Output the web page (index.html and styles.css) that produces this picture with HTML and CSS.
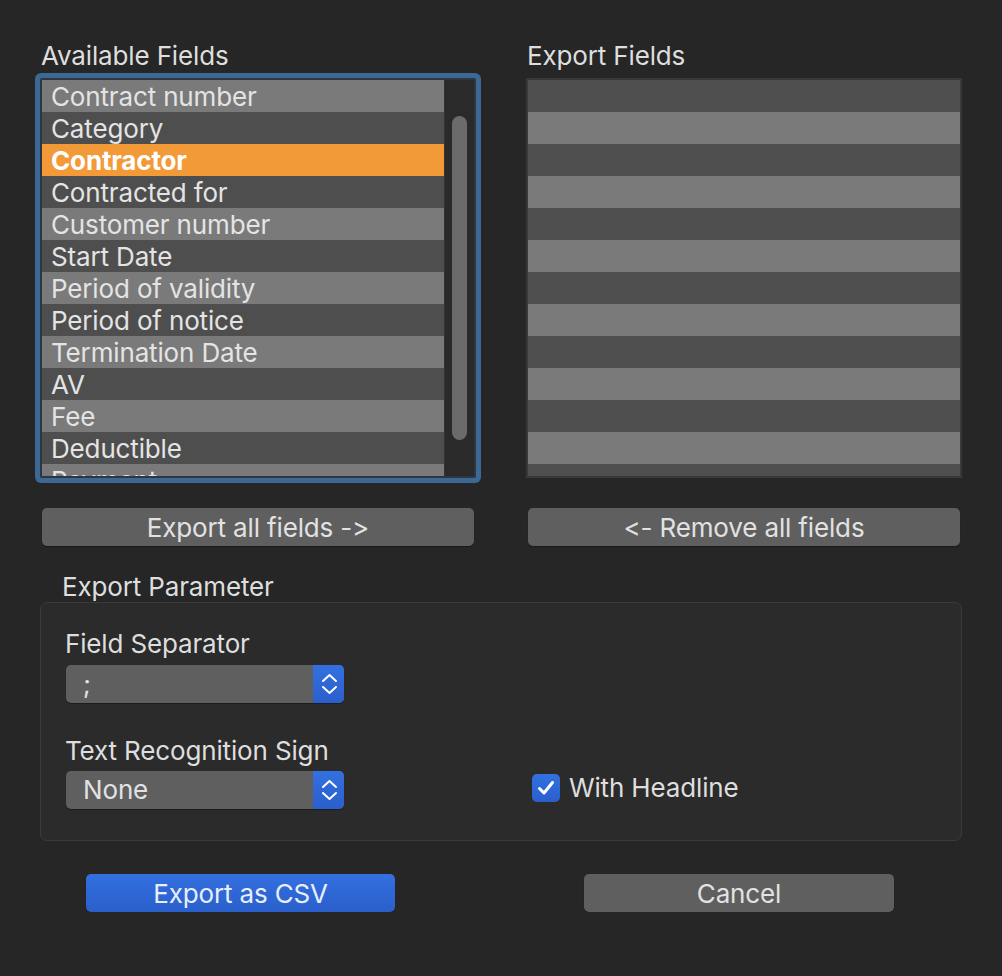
FILE: index.html
```html
<!DOCTYPE html>
<html lang="en">
<head>
    <meta charset="UTF-8">
    <meta name="viewport" content="width=device-width, initial-scale=1.0">
    <title>Export</title>
    <link rel="stylesheet" href="styles.css">
</head>
<body>
    <div class="dialog">
        <div class="columns">
            <div class="column">
                <div class="caption">Available Fields</div>
                <div class="list focused">
                    <ul class="rows odd-first">
                        <li>Contract number</li>
                        <li>Category</li>
                        <li class="selected">Contractor</li>
                        <li>Contracted for</li>
                        <li>Customer number</li>
                        <li>Start Date</li>
                        <li>Period of validity</li>
                        <li>Period of notice</li>
                        <li>Termination Date</li>
                        <li>AV</li>
                        <li>Fee</li>
                        <li>Deductible</li>
                        <li>Payment</li>
                    </ul>
                    <div class="scroller"><div class="thumb"></div></div>
                </div>
                <button class="push">Export all fields -&gt;</button>
            </div>
            <div class="column">
                <div class="caption">Export Fields</div>
                <div class="list">
                    <ul class="rows">
                        <li></li><li></li><li></li><li></li><li></li><li></li><li></li>
                        <li></li><li></li><li></li><li></li><li></li><li></li>
                    </ul>
                </div>
                <button class="push">&lt;- Remove all fields</button>
            </div>
        </div>

        <div class="caption group-caption">Export Parameter</div>
        <div class="group">
            <div class="params">
                <div class="label">Field Separator</div>
                <div class="popup">
                    <span class="popup-value">;</span>
                    <span class="popup-arrows">
                        <svg width="31" height="38" viewBox="0 0 31 38"><path d="M10 16 L16.5 10 L23 16 M10 22 L16.5 28 L23 22" fill="none" stroke="#fff" stroke-width="2" stroke-linecap="round" stroke-linejoin="round"/></svg>
                    </span>
                </div>
                <div class="label second">Text Recognition Sign</div>
                <div class="popup">
                    <span class="popup-value">None</span>
                    <span class="popup-arrows">
                        <svg width="31" height="38" viewBox="0 0 31 38"><path d="M10 16 L16.5 10 L23 16 M10 22 L16.5 28 L23 22" fill="none" stroke="#fff" stroke-width="2" stroke-linecap="round" stroke-linejoin="round"/></svg>
                    </span>
                </div>
            </div>
            <label class="check">
                <span class="box">
                    <svg width="28" height="28" viewBox="0 0 28 28"><path d="M7.5 14.5 L12 19 L20.5 8.5" fill="none" stroke="#fff" stroke-width="3" stroke-linecap="round" stroke-linejoin="round"/></svg>
                </span>
                With Headline
            </label>
        </div>

        <div class="actions">
            <button class="push default">Export as CSV</button>
            <button class="push cancel">Cancel</button>
        </div>
    </div>
</body>
</html>
```

FILE: styles.css
```css
body {
    margin: 0;
    background-color: #262626;
    color: #dedede;
    font-family: Inter, "Noto Sans", sans-serif;
    font-size: 26px;
    letter-spacing: -0.15px;
    font-feature-settings: "calt" 0, "liga" 0;
}
.dialog {
    padding: 41px 40px 0 40px;
    width: 922px;
}
.columns {
    display: flex;
    gap: 50px;
}
.column {
    width: 436px;
    display: flex;
    flex-direction: column;
}
.caption {
    line-height: 30px;
    height: 30px;
    padding-left: 1px;
    margin-bottom: 7px;
}
.list {
    height: 396px;
    border: 2px solid #383838;
    background-color: #2b2b2b;
    display: flex;
    overflow: hidden;
}
.focused {
    border-color: #2e3640;
    border-radius: 2px;
    box-shadow: 0 0 0 5px #3b6894;
}
.rows {
    list-style: none;
    margin: 0;
    padding: 0;
    flex: 1;
}
.rows li {
    height: 32px;
    line-height: 33px;
    padding-left: 9px;
    white-space: nowrap;
    background-color: #4e4e4e;
    color: #e4e4e4;
}
.rows li:nth-child(even) {
    background-color: #7a7a7a;
}
.odd-first li:nth-child(odd) {
    background-color: #7a7a7a;
}
.odd-first li:nth-child(even) {
    background-color: #4e4e4e;
}
.rows li.selected {
    background-color: #f39a38;
    color: #fff;
    font-weight: 700;
}
.scroller {
    width: 30px;
    background-color: #2a2a2a;
    border-left: 1px solid #333;
    padding-top: 36px;
    box-sizing: border-box;
}
.thumb {
    width: 15px;
    height: 324px;
    margin-left: 7px;
    border-radius: 8px;
    background-color: #6b6b6b;
}
.push {
    font-family: inherit;
    font-size: 26px;
    letter-spacing: -0.15px;
    font-feature-settings: "calt" 0, "liga" 0;
    color: #e2e2e2;
    background-color: #5f5f5f;
    border: none;
    border-radius: 5px;
    height: 38px;
    padding: 0;
    box-shadow: 0 1px 1px rgba(0, 0, 0, 0.35);
}
.column .push {
    margin: 30px 2px 0 2px;
}
.group-caption {
    margin: 26px 0 0 0;
    padding-left: 22px;
}
.group {
    box-sizing: border-box;
    border: 1px solid #3b3b3b;
    border-radius: 7px;
    background-color: #2b2b2b;
    height: 239px;
    padding: 26px 24px 0 24px;
    display: flex;
}
.params {
    width: 280px;
}
.label {
    line-height: 30px;
}
.label.second {
    margin-top: 33px;
}
.popup {
    margin: 6px 0 0 1px;
    width: 278px;
    height: 38px;
    border-radius: 5px;
    background-color: #5f5f5f;
    display: flex;
    overflow: hidden;
    box-shadow: 0 1px 1px rgba(0, 0, 0, 0.35);
}
.label.second + .popup {
    margin-top: 5px;
}
.popup-value {
    flex: 1;
    line-height: 38px;
    padding-left: 17px;
    color: #e2e2e2;
}
.popup-arrows {
    width: 31px;
    background: linear-gradient(#3371e0, #2a5fcc);
    display: flex;
}
.check {
    margin: 0 0 0 187px;
    align-self: flex-start;
    margin-top: 142px;
    display: flex;
    align-items: center;
    gap: 9px;
    line-height: 34px;
}
.box {
    width: 28px;
    height: 28px;
    border-radius: 5px;
    background: linear-gradient(#3371e0, #2a5fcc);
    display: flex;
}
.actions {
    display: flex;
    padding-left: 46px;
    gap: 189px;
    margin-top: 33px;
}
.actions .push {
    width: 310px;
}
.actions .default {
    width: 309px;
    background: linear-gradient(#3370df, #2a5fcb);
    color: #e8eefa;
}
```
